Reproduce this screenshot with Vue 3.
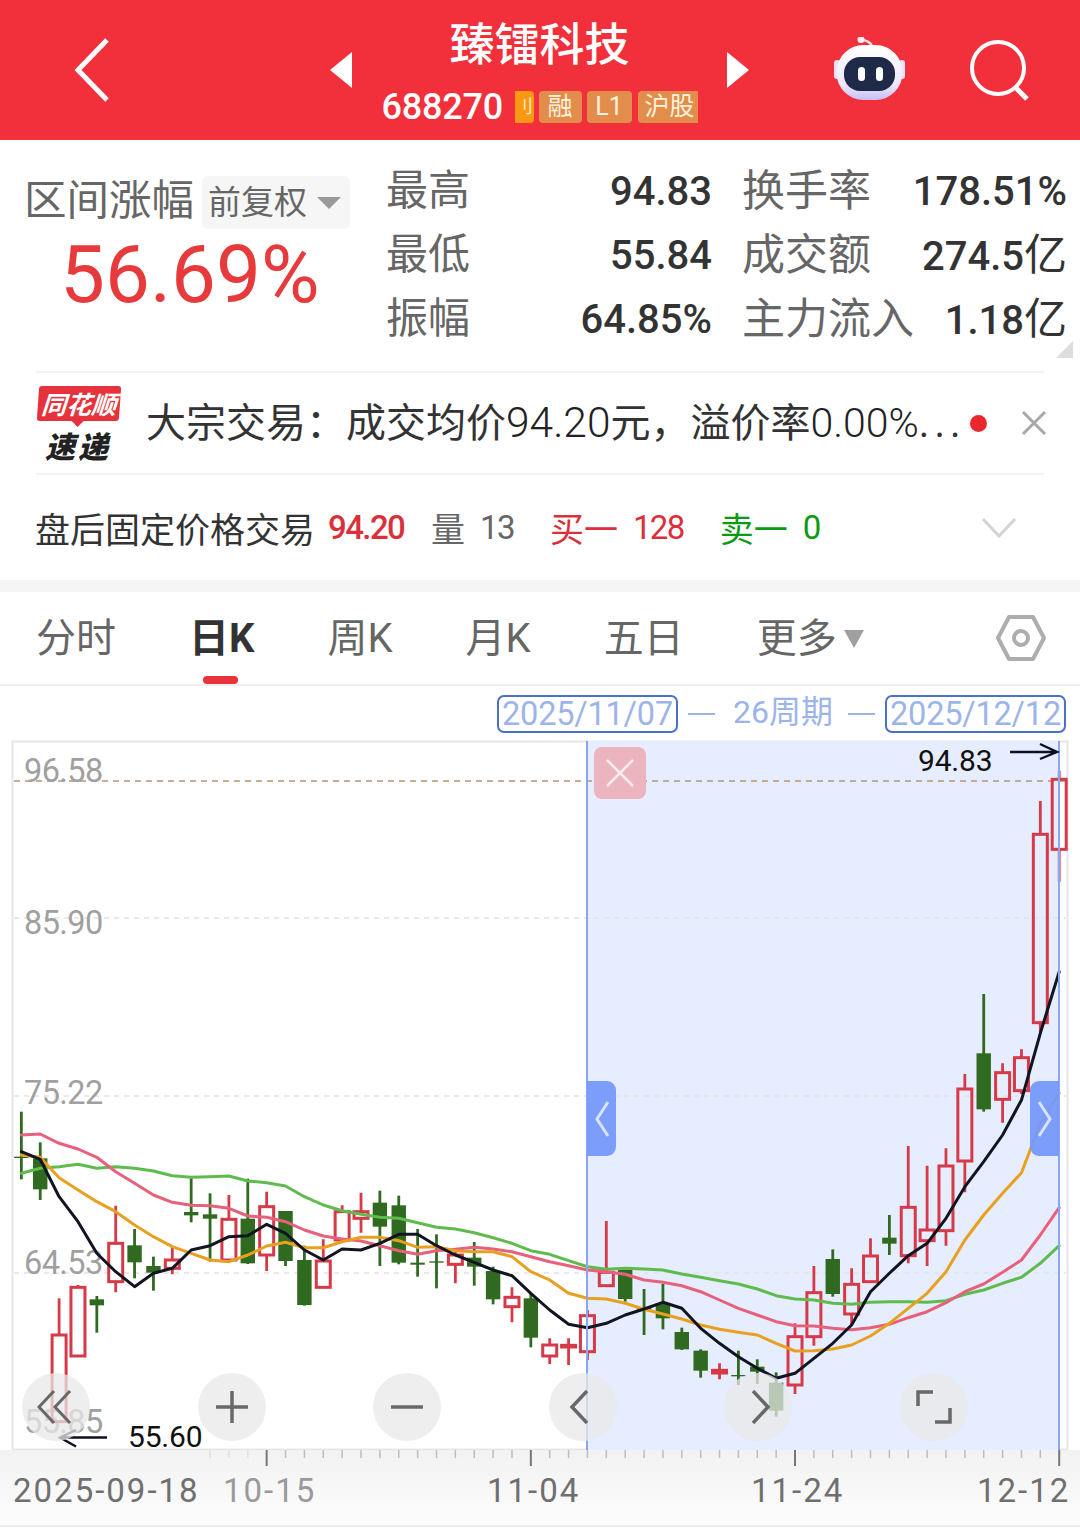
<script setup>
const R = '#d63a48'
const G = '#2f6a20'
const px = i => 21.35 + 18.87 * i
const py = z => 1080 + z / 3
// kind, high, low, body top, body bottom (in chart units)
const raw = [
  ['g',95,298,230,234],['g',187,360,235,328],['r',655,1025,765,1025],['r',615,828,622,828],
  ['g',648,758,658,676],['r',377,637,490,605],['g',447,595,496,547],['g',530,632,558,578],
  ['r',500,583,540,565],['g',295,427,396,406],['g',340,545,403,416],['r',345,548,418,540],
  ['g',296,552,416,550],['r',335,573,380,525],['g',393,558,393,543],['g',497,677,540,675],
  ['r',478,623,543,622],['r',376,485,395,480],['r',338,458,395,415],['g',332,558,368,440],
  ['g',347,553,376,548],['g',447,590,548,554],['g',463,625,544,548],['r',505,610,525,553],
  ['g',486,617,533,560],['g',560,673,573,658],['r',622,727,652,680],['g',640,802,655,773],
  ['r',775,852,795,828],['r',775,855,796,801],['r',690,840,707,815],['r',423,620,577,617],
  ['g',570,665,570,657],['g',627,765,683,689],['g',612,748,672,715],['g',743,810,756,808],
  ['g',808,893,812,872],['r',850,898,871,879],['g',812,915,885,889],['g',838,912,860,875],
  ['g',877,1010,908,992],['r',730,942,770,915],['r',558,797,638,770],['g',508,650,537,642],
  ['r',565,735,613,702],['r',475,605,528,605],['g',405,525,473,491],['r',198,550,382,527],
  ['r',257,558,450,482],['r',205,497,258,452],['r',-18,337,27,243],['g',-258,95,-80,88],
  ['r',-50,128,-22,58],['r',-92,42,-67,32],['r',-837,-145,-737,-172],['r',-928,-595,-902,-692]
]
const candles = raw.map(([k, hi, lo, top, bot], i) => ({
  i, red: k === 'r', x: px(i),
  hi: py(hi), lo: py(lo), top: py(top), bot: py(bot)
}))
const line = a => a.map((z, i) => `${px(i).toFixed(1)},${py(z).toFixed(1)}`).join(' ')
const ma = [
  { c: '#5fbb4e', p: line([280,265,260,253,265,260,265,273,287,292,290,288,303,308,318,350,375,392,403,412,415,428,442,447,458,473,490,512,523,542,560,568,565,567,570,582,592,602,612,627,647,657,660,670,673,667,665,665,667,662,643,630,610,592,550,497]) },
  { c: '#e7607c', p: line([165,162,190,207,232,275,310,345,367,376,377,385,408,412,425,450,468,477,483,497,512,523,512,508,502,507,515,530,545,557,570,575,583,600,607,617,635,660,685,705,725,737,738,745,749,743,733,713,695,668,635,612,577,540,465,383]) },
  { c: '#e8a020', p: line([225,232,293,330,365,395,435,470,500,520,540,545,525,498,487,503,503,485,472,472,482,502,500,512,515,515,530,575,600,640,655,657,670,688,702,717,735,748,757,765,790,813,812,807,795,768,730,685,640,575,480,405,340,278,130,40]) },
  { c: '#111522', p: line([215,238,350,425,520,575,620,580,565,510,497,470,467,433,460,510,540,507,510,490,463,463,497,525,547,570,587,640,690,733,743,730,705,687,667,685,745,790,830,865,895,880,835,790,735,635,580,527,490,415,320,245,165,60,-140,-325]) }
]
const grids = [918, 1096, 1273]
const yLabels = [
  ['96.58', 782], ['85.90', 934], ['75.22', 1104], ['64.53', 1274], ['55.85', 1433]
]
const ticks = Array.from({ length: 46 }, (_, k) => {
  const i = k + 10
  return { x: px(i), major: (i - 13) % 14 === 0, o: k < 3 ? 0.35 : 1 }
})
const tabs = ['分时', '日K', '周K', '月K', '五日']
</script>

<template>
  <div class="page">
    <header class="top">
      <div class="top-left">
        <svg width="40" height="66" viewBox="0 0 40 66"><path d="M34 3 5 33l29 30" fill="none" stroke="#fff" stroke-width="5"/></svg>
      </div>
      <div class="top-mid">
        <svg width="24" height="36" viewBox="0 0 24 36"><path d="M23 0v36L1 18z" fill="#fff"/></svg>
        <div class="name">
          <div class="title">臻镭科技</div>
          <div class="sub">
            <span class="code">688270</span>
            <span class="tag t0">刂</span>
            <span class="tag t1">融</span>
            <span class="tag t2">L1</span>
            <span class="tag t3">沪股</span>
          </div>
        </div>
        <svg width="24" height="36" viewBox="0 0 24 36"><path d="M1 0v36l22-18z" fill="#fff"/></svg>
      </div>
      <div class="top-right">
        <svg class="robot" width="74" height="70" viewBox="0 0 74 70">
          <defs>
            <linearGradient id="rb" x1="0" y1="0" x2="0" y2="1">
              <stop offset="0" stop-color="#ffffff"/>
              <stop offset=".7" stop-color="#eeeafc"/>
              <stop offset="1" stop-color="#c6c0f2"/>
            </linearGradient>
          </defs>
          <path d="M28 3c5 0 9 2 11 6" fill="none" stroke="#f5dfe6" stroke-width="2.500"/>
          <circle cx="28" cy="2.600" r="3.500" fill="#fbeef2"/>
          <rect x="1" y="23" width="6" height="19" rx="3" fill="#e6e2fa"/>
          <rect x="66" y="23" width="6" height="19" rx="3" fill="#e6e2fa"/>
          <rect x="3.500" y="8" width="66" height="55" rx="27" fill="url(#rb)"/>
          <rect x="11" y="20" width="51" height="34" rx="16" fill="#1f2a48"/>
          <rect x="25" y="30" width="7" height="14" rx="3.500" fill="#fff"/>
          <rect x="43" y="30" width="7" height="14" rx="3.500" fill="#fff"/>
        </svg>
        <svg width="62" height="62" viewBox="0 0 62 62"><circle cx="29" cy="29" r="26" fill="none" stroke="#fff" stroke-width="4"/><path d="m46 48 12 12" stroke="#fff" stroke-width="5"/></svg>
      </div>
    </header>

    <section class="stats">
      <div class="range">
        <div class="range-head">
          <span class="range-label">区间涨幅</span>
          <span class="chip">前复权<i class="chip-arrow"></i></span>
        </div>
        <div class="pct">56.69%</div>
      </div>
      <div class="grid">
        <span class="lb">最高</span><span class="val">94.83</span><span class="lb">换手率</span><span class="val">178.51%</span>
        <span class="lb">最低</span><span class="val">55.84</span><span class="lb">成交额</span><span class="val">274.5<b class="cn">亿</b></span>
        <span class="lb">振幅</span><span class="val">64.85%</span><span class="lb">主力流入</span><span class="val">1.18<b class="cn">亿</b></span>
      </div>
      <i class="corner"></i>
    </section>

    <section class="notice">
      <div class="logo">
        <div class="logo-top">同花顺</div>
        <div class="logo-bot">速递</div>
      </div>
      <div class="notice-text">大宗交易：成交均价<span class="d d1">94.20</span>元，溢价率<span class="d">0.00%</span><span class="e">...</span></div>
      <i class="dot"></i>
      <svg class="close" width="26" height="26" viewBox="0 0 26 26"><path d="m2 2 22 22M24 2 2 24" stroke="#a8a8a8" stroke-width="3"/></svg>
    </section>

    <section class="after">
      <span class="after-t">盘后固定价格交易</span>
      <span class="num red n1">94.20</span>
      <span class="cnx gray m1">量</span><span class="num gray n2">13</span>
      <span class="cnx red m2">买一</span><span class="num red n2">128</span>
      <span class="cnx green m3">卖一</span><span class="num green n2">0</span>
      <svg class="chev" width="34" height="20" viewBox="0 0 34 20"><path d="m1 1 16 17L33 1" fill="none" stroke="#d4d4d4" stroke-width="3"/></svg>
    </section>

    <div class="band"></div>

    <nav class="tabs">
      <span v-for="t in tabs" :key="t" class="tab" :class="{ on: t === '日K' }">{{ t }}</span>
      <span class="tab more">更多<i class="more-arrow"></i></span>
      <svg class="hex" width="50" height="48" viewBox="0 0 50 48"><path d="M13 3h24l11 21-11 21H13L2 24z" fill="none" stroke="#adadad" stroke-width="4" stroke-linejoin="round"/><circle cx="25" cy="24" r="7" fill="none" stroke="#adadad" stroke-width="4"/></svg>
    </nav>

    <div class="period">
      <span class="date">2025/11/07</span>
      <span class="dash dash-a"></span>
      <span class="cycle">26周期</span>
      <span class="dash dash-b"></span>
      <span class="date">2025/12/12</span>
    </div>

    <div class="chart">
      <svg class="plot" width="1080" height="710" viewBox="0 741 1080 710">
        <rect x="12.5" y="741.5" width="1055" height="708" fill="#fff" stroke="#e6e6e6" stroke-width="2"/>
        <rect x="587" y="741" width="472" height="709" fill="#e6edfe"/>
        <line v-for="g in grids" :key="g" x1="14" x2="1066" :y1="g" :y2="g" stroke="#e2e2e2" stroke-width="1.5" stroke-dasharray="5 5"/>
        <line x1="14" x2="1066" y1="781" y2="781" stroke="#b9976f" stroke-width="1.5" stroke-dasharray="6 5"/>
        <text v-for="l in yLabels" :key="l[0]" x="24" :y="l[1]" class="ylab">{{ l[0] }}</text>
        <g v-for="c in candles" :key="c.i">
          <template v-if="c.red">
            <path :d="`M${c.x} ${c.hi}V${c.top}M${c.x} ${c.bot}V${c.lo}`" :stroke="R" stroke-width="2.8" fill="none"/>
            <rect :x="c.x - 7" :y="c.top" width="14" :height="c.bot - c.top" :stroke="R" stroke-width="3" fill="none"/>
          </template>
          <template v-else>
            <path :d="`M${c.x} ${c.hi}V${c.lo}`" :stroke="G" stroke-width="2.8" fill="none"/>
            <rect :x="c.x - 7.2" :y="c.top" width="14.4" :height="c.bot - c.top" :fill="G"/>
          </template>
        </g>
        <polyline v-for="m in ma" :key="m.c" :points="m.p" fill="none" :stroke="m.c" stroke-width="3" stroke-linejoin="round" stroke-linecap="round"/>
        <path d="M587 741V1450M1059 741V1450" stroke="#8aa7ee" stroke-width="2" fill="none"/>
        <text x="918" y="771" class="mark">94.83</text>
        <path d="M1010 752h47M1040 744l17 8-17 7" fill="none" stroke="#0c1020" stroke-width="2.4"/>
        <text x="128" y="1447" class="mark">55.60</text>
        <path d="M107 1437.500H62M76 1430l-16 7.500 16 9" fill="none" stroke="#0c1020" stroke-width="2.400"/>
      </svg>

      <div class="x-btn">
        <svg width="30" height="30" viewBox="0 0 30 30"><path d="m2 2 26 26M28 2 2 28" stroke="#fdeeee" stroke-width="2.500"/></svg>
      </div>
      <div class="handle h-l">
        <svg width="16" height="38" viewBox="0 0 16 38"><path d="M14 2 3 19l11 17" fill="none" stroke="#d7e2ff" stroke-width="3"/></svg>
      </div>
      <div class="handle h-r">
        <svg width="16" height="38" viewBox="0 0 16 38"><path d="m2 2 11 17L2 36" fill="none" stroke="#d7e2ff" stroke-width="3"/></svg>
      </div>

      <div class="btns">
        <span class="btn"><svg width="38" height="34" viewBox="0 0 38 34"><path d="M17 1 2 17l15 16M33 1 18 17l15 16" fill="none" stroke="#686868" stroke-width="3"/></svg></span>
        <span class="btn"><svg width="34" height="34" viewBox="0 0 34 34"><path d="M17 1v32M1 17h32" stroke="#686868" stroke-width="3.500"/></svg></span>
        <span class="btn"><svg width="34" height="34" viewBox="0 0 34 34"><path d="M1 17h32" stroke="#686868" stroke-width="3.500"/></svg></span>
        <span class="btn"><svg class="nudge-l" width="20" height="34" viewBox="0 0 20 34"><path d="M18 1 3 17l15 16" fill="none" stroke="#686868" stroke-width="3.500"/></svg></span>
        <span class="btn"><svg class="nudge-r" width="20" height="34" viewBox="0 0 20 34"><path d="m2 1 15 16L2 33" fill="none" stroke="#686868" stroke-width="3.500"/></svg></span>
        <span class="btn"><svg width="36" height="36" viewBox="0 0 36 36"><path d="M2 17V3h15M34 19v14H19" fill="none" stroke="#686868" stroke-width="3.500"/></svg></span>
      </div>
    </div>

    <div class="axis">
      <svg class="ticks" width="1080" height="18" viewBox="0 0 1080 18">
        <line v-for="t in ticks" :key="t.x" :x1="t.x" :x2="t.x" y1="0" :y2="t.major ? 16 : 8" :stroke="t.major ? '#777' : '#bdbdbd'" :stroke-width="t.major ? 2 : 1.500" :opacity="t.o"/>
      </svg>
      <div class="dates">
        <span class="dt first">2025-09-18</span>
        <span class="dt faint">10-15</span>
        <span class="dt d3">11-04</span>
        <span class="dt d4">11-24</span>
        <span class="dt d5">12-12</span>
      </div>
    </div>
    <div class="foot"></div>
  </div>
</template>

<style>
html, body { margin: 0; background: #fff; }
</style>

<style scoped>
.page { width: 1080px; height: 1539px; overflow: hidden; background: #fff; font-family: Roboto, "Noto Sans CJK SC", sans-serif; color: #333; }
.top { height: 140px; background: #f2303c; display: grid; grid-template-columns: 1fr 440px 1fr; align-items: center; box-sizing: border-box; }
.top-left { padding-left: 73px; display: flex; }
.top-mid { display: flex; justify-content: space-between; align-items: center; padding: 0 10px 0 9px; }
.name { display: flex; flex-direction: column; align-items: center; }
.title { color: #fff; font-size: 45px; line-height: 58px; font-weight: 500; margin-top: 17px; }
.sub { display: flex; align-items: center; height: 32px; margin-top: 16px; margin-bottom: 17px; }
.code { color: #fff; font-size: 36px; line-height: 32px; width: 133px; font-weight: 500; letter-spacing: -.2px; }
.tag { height: 32px; line-height: 32px; background: #e28d4b; color: #fff2dc; font-size: 25px; text-align: center; border-radius: 4px; margin-right: 5px; }
.t0 { width: 19px; background: #fb9a12; font-size: 18px; margin-right: 5px; border-radius: 0 4px 4px 0; }
.t1 { width: 43px; }
.t2 { width: 45px; margin-right: 6px; }
.t3 { width: 60px; margin-right: 0; white-space: nowrap; text-align: right; padding-right: 3px; box-sizing: border-box; border-radius: 4px 0 0 4px; }
.top-right { display: flex; align-items: center; padding-left: 73px; gap: 62px; }
.robot { margin-top: 4px; }

.stats { height: 231px; display: flex; position: relative; box-sizing: border-box; }
.range { width: 386px; padding: 36px 0 0 24px; box-sizing: border-box; }
.range-head { display: flex; align-items: center; height: 53px; }
.range-label { font-size: 42.500px; color: #666; width: 178px; white-space: nowrap; line-height: 53px; margin-top: -4px; }
.chip { width: 148px; height: 53px; background: #f6f6f6; border-radius: 6px; font-size: 33px; color: #666; line-height: 53px; padding-left: 6px; box-sizing: border-box; display: flex; align-items: center; white-space: nowrap; }
.chip-arrow { width: 0; height: 0; border: 12px solid transparent; border-top: 12px solid #999; border-bottom: 0; margin-left: 10px; }
.pct { color: #e63a3c; font-size: 80px; line-height: 92px; margin: 0 0 0 36px; white-space: nowrap; }
.grid { padding-top: 19px; display: grid; grid-template-columns: 100px 226px 199px 156px; grid-auto-rows: 64px; align-items: center; }
.lb { font-size: 42px; color: #666; white-space: nowrap; line-height: 64px; }
.lb:nth-child(4n+3) { padding-left: 30px; font-size: 43px; }
.val { font-size: 40px; font-weight: 500; text-align: right; color: #333; white-space: nowrap; line-height: 62px; padding-top: 2px; }
.cn { font-size: 43px; font-weight: 400; }
.corner { position: absolute; right: 7px; bottom: 13px; width: 0; height: 0; border-style: solid; border-width: 0 0 17px 17px; border-color: transparent transparent #ddd transparent; }

.notice { height: 104px; margin: 0 36px; box-sizing: border-box; border-top: 2px solid #f3f3f3; border-bottom: 2px solid #f3f3f3; display: flex; align-items: center; }
.logo { width: 110px; flex: none; }
.logo-top { width: 82px; height: 35px; background: #e6323c; color: #fff; font: italic 700 25px/35px "Noto Sans CJK SC", sans-serif; text-align: center; border-radius: 3px; transform: skewX(-4deg); position: relative; margin: 0 0 0 2px; }
.logo-top::after { content: ""; position: absolute; left: 34px; bottom: -6px; border: 7px solid transparent; border-top: 7px solid #e6323c; border-bottom: 0; }
.logo-bot { width: 84px; font: italic 900 30px/32px "Noto Sans CJK SC", sans-serif; color: #222; text-align: center; margin-top: 8px; letter-spacing: 3px; }
.notice-text { font-size: 40px; color: #333; white-space: nowrap; width: 823px; font-weight: 400; line-height: 60px; flex: none; }
.d { font-size: 41px; font-weight: 300; color: #222; }
.d1 { font-size: 42.500px; }
.e { letter-spacing: 5px; }
.dot { width: 17px; height: 17px; border-radius: 50%; background: #e8282e; margin-left: 1px; flex: none; }
.close { margin-left: 34px; flex: none; }

.after { height: 105px; margin: 0 36px; display: flex; align-items: center; white-space: nowrap; }
.after-t { font-size: 35px; color: #333; width: 293px; margin-left: -1px; }
.num { font-size: 33px; letter-spacing: -1.600px; }
.cnx { font-size: 33px; }
.red { color: #d9303a; }
.gray { color: #666; }
.green { color: #0c9a16; }
.n1 { width: 103px; font-weight: 500; }
.n2 { margin-left: 15px; font-weight: 400; }
.m1, .m2, .m3 { font-size: 34px; }
.m2 { margin-left: 36px; }
.m3 { margin-left: 36px; }
.chev { margin-left: auto; margin-right: 28px; }

.band { height: 12px; background: #f5f5f5; }

.tabs { height: 94px; box-sizing: border-box; border-bottom: 2px solid #efefef; display: flex; align-items: center; padding: 0 34px 0 36px; gap: 73px; position: relative; }
.tab { font-size: 40px; color: #666; white-space: nowrap; line-height: 90px; padding-top: 2px; }
.tab.on { font-weight: 700; color: #333; position: relative; }
.tab.on::after { content: ""; position: absolute; left: 14px; bottom: 0; width: 35px; height: 8px; border-radius: 4px; background: #e8323c; }
.more { display: flex; align-items: center; }
.more-arrow { width: 0; height: 0; border: 10px solid transparent; border-top: 18px solid #a0a0a0; border-bottom: 0; margin-left: 7px; }
.hex { margin-left: auto; }

.period { height: 55px; display: flex; align-items: center; justify-content: flex-end; padding-right: 14px; color: #9db4ea; white-space: nowrap; }
.date { width: 181px; height: 38px; box-sizing: border-box; border: 2px solid #4a70c8; border-radius: 7px; font-size: 32.500px; line-height: 35px; text-align: center; color: #9db4ea; letter-spacing: -.2px; }
.dash { width: 27px; height: 2px; background: #9db4ea; }
.dash-a { margin: 0 18px 0 10px; }
.dash-b { margin: 0 10px 0 17px; }
.cycle { font-size: 32px; line-height: 40px; width: 98px; white-space: nowrap; margin-top: -3px; }

.chart { height: 709px; position: relative; }
.plot { display: block; overflow: visible; }
.ylab { font-size: 32.500px; fill: #a0a0a0; letter-spacing: -.6px; font-family: Roboto, sans-serif; }
.mark { font-size: 30px; fill: #111; font-family: Roboto, sans-serif; letter-spacing: -.2px; }
.x-btn { position: absolute; left: 594px; top: 6px; width: 52px; height: 52px; border-radius: 8px; background: #ebb4bf; display: flex; align-items: center; justify-content: center; }
.handle { position: absolute; top: 340px; width: 29px; height: 75px; background: rgba(118, 152, 250, .94); display: flex; align-items: center; justify-content: center; }
.h-l { left: 587px; border-radius: 0 9px 9px 0; }
.h-r { left: 1030px; border-radius: 9px 0 0 9px; }
.btns { position: absolute; left: 22px; top: 632px; display: flex; gap: 107.600px; }
.btn { width: 68px; height: 68px; border-radius: 50%; background: rgba(232, 232, 232, .75); display: flex; align-items: center; justify-content: center; }
.nudge-l { margin-left: -8px; }
.nudge-r { margin-left: 6px; }

.axis { height: 75px; background: linear-gradient(#f2f2f2, #fdfdfd); position: relative; box-sizing: border-box; }
.ticks { display: block; }
.dates { display: flex; padding-left: 13px; white-space: nowrap; height: 45px; align-items: center; }
.dt { font-size: 33px; color: #6f6f6f; letter-spacing: 2px; line-height: 44px; }
.first { width: 210px; }
.faint { color: #9a9a9a; width: 264px; }
.d3 { width: 264px; }
.d4 { width: 226px; }
.foot { height: 14px; border-top: 2px solid #ededed; }
</style>
